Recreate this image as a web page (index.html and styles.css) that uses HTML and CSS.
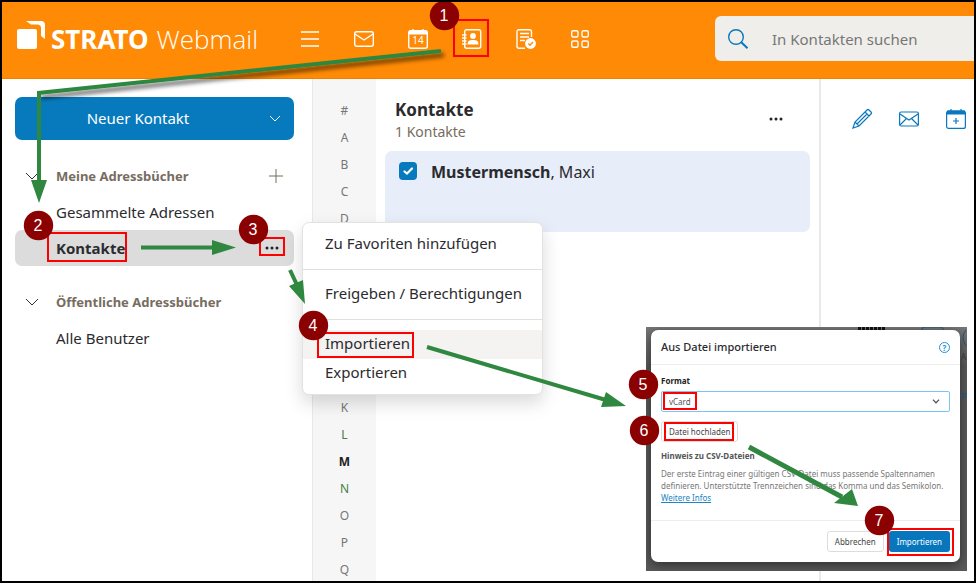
FILE: index.html
```html
<!DOCTYPE html>
<html lang="de">
<head>
<meta charset="utf-8">
<title>STRATO Webmail – Kontakte</title>
<link rel="stylesheet" href="styles.css">
</head>
<body>
<header class="topbar">
  <a class="brand" href="#">
    <svg class="brand-mark" viewBox="0 0 28 28" aria-hidden="true">
      <rect x="0" y="8" width="20" height="20" rx="2"/>
      <path d="M9 0H24Q28 0 28 4V18L24 15V7Q24 3.500 20 3.500H14Z"/>
    </svg>
    <span class="brand-name">STRATO</span>
    <span class="brand-product">Webmail</span>
  </a>
  <nav class="apps" aria-label="Anwendungen">
    <button class="app" aria-label="Menü"><svg viewBox="0 0 20 20"><path d="M1 3H19M1 10H19M1 17H19"/></svg></button>
    <button class="app" aria-label="E-Mail"><svg viewBox="0 0 20 20"><rect x=".7" y="2.700" width="18.600" height="14.600" rx="2"/><path d="M1 5L10 11L19 5"/></svg></button>
    <button class="app" aria-label="Kalender"><svg viewBox="0 0 20 20"><rect x=".7" y="1.700" width="18.600" height="17.600" rx="2"/><path d="M1 3.500H19" stroke-width="4"/><path d="M5 0V2M15 0V2"/><text class="cal-day" x="10" y="15">14</text></svg></button>
    <button class="app" aria-label="Kontakte"><svg viewBox="0 0 20 20"><rect x="2.700" y=".7" width="16" height="18.600" rx="2"/><path d="M0 6H4.500M0 9H4.500M0 12H4.500M0 15H4.500"/><circle class="solid" cx="11" cy="7" r="2.900"/><path class="solid" d="M5.500 15.500C5.500 11.500 8 11 11 11S16.500 11.500 16.500 15.500Z"/></svg></button>
    <button class="app" aria-label="Aufgaben"><svg viewBox="0 0 20 20"><path d="M9 19.300H3Q1 19.300 1 17.300V2.700Q1 .7 3 .7H13.500Q15.500.7 15.500 2.700V8M4 4.500H13M4 8H13M4 11.500H9"/><circle class="solid" cx="14.500" cy="14.500" r="5.400"/><path class="tick" d="M12.300 14.500L14 16.200L17 13"/></svg></button>
    <button class="app" aria-label="Alle Apps"><svg viewBox="0 0 20 20"><rect x="1.700" y="1.700" width="6.300" height="6.300" rx="1.500"/><rect x="12" y="1.700" width="6.300" height="6.300" rx="1.500"/><rect x="1.700" y="12" width="6.300" height="6.300" rx="1.500"/><rect x="12" y="12" width="6.300" height="6.300" rx="1.500"/></svg></button>
  </nav>
  <label class="search">
    <svg viewBox="0 0 20 20" aria-hidden="true"><circle cx="8" cy="8" r="7.300"/><path d="M13 13L19.500 19.300" stroke-width="2"/></svg>
    <input type="search" placeholder="In Kontakten suchen" aria-label="In Kontakten suchen">
  </label>
</header>

<main class="workspace">
  <aside class="sidebar">
    <button class="new-contact"><span>Neuer Kontakt</span><svg class="chevron" viewBox="0 0 12 8"><path d="M1 1L6 6L11 1"/></svg></button>
    <section class="books">
      <h2 class="books-title"><svg class="chevron" viewBox="0 0 12 8"><path d="M0 1L6 7L12 1"/></svg><span>Meine Adressbücher</span>
        <button class="add" aria-label="Adressbuch hinzufügen"><svg viewBox="0 0 14 14"><path d="M7 0V14M0 7H14"/></svg></button></h2>
      <a class="book" href="#">Gesammelte Adressen</a>
      <a class="book book-active" href="#">Kontakte<svg class="dots" viewBox="0 0 14 4"><circle cx="2" cy="2" r="1.500"/><circle cx="7" cy="2" r="1.500"/><circle cx="12" cy="2" r="1.500"/></svg></a>
    </section>
    <section class="books">
      <h2 class="books-title"><svg class="chevron" viewBox="0 0 12 8"><path d="M0 1L6 7L12 1"/></svg><span>Öffentliche Adressbücher</span></h2>
      <a class="book" href="#">Alle Benutzer</a>
    </section>
  </aside>

  <nav class="letters" aria-label="Alphabet">
    <div class="letter-group"><a href="#">#</a><a href="#">A</a><a href="#">B</a><a href="#">C</a><a href="#">D</a></div>
    <div class="letter-group"><a href="#">K</a><a href="#" class="green">L</a><a href="#" class="current">M</a><a href="#" class="green">N</a><a href="#">O</a><a href="#">P</a><a href="#">Q</a></div>
  </nav>

  <section class="contacts">
    <div class="contacts-head">
      <div>
        <h1>Kontakte</h1>
        <p>1 Kontakte</p>
      </div>
      <button class="more" aria-label="Weitere Aktionen"><svg class="dots" viewBox="0 0 14 4"><circle cx="2" cy="2" r="1.500"/><circle cx="7" cy="2" r="1.500"/><circle cx="12" cy="2" r="1.500"/></svg></button>
    </div>
    <label class="contact"><input type="checkbox" checked><span><b>Mustermensch</b>, Maxi</span></label>
  </section>

  <section class="detail">
    <button aria-label="Bearbeiten"><svg viewBox="0 0 20 20"><path d="M1 19L3 13L15 1Q16 0 17 1L19 3Q20 4 19 5L7 17ZM3 13L7 17M13 3L17 7M5 15L15 5"/></svg></button>
    <button aria-label="E-Mail senden"><svg viewBox="0 0 20 20"><rect x=".6" y="3" width="18.800" height="14" rx="1.500"/><path d="M1 5L10 11L19 5M1 16L7.500 9.500M19 16L12.500 9.500"/></svg></button>
    <button aria-label="Termin einladen"><svg viewBox="0 0 20 20"><rect x=".6" y="2" width="18.800" height="17.400" rx="2"/><path d="M1 3.500H19" stroke-width="4"/><path d="M5 0V2M15 0V2M10 9V15M7 12H13"/></svg></button>
  </section>
</main>

<div class="menu" role="menu">
  <button role="menuitem">Zu Favoriten hinzufügen</button>
  <hr>
  <button role="menuitem">Freigeben / Berechtigungen</button>
  <hr>
  <button role="menuitem" class="hover">Importieren</button>
  <button role="menuitem">Exportieren</button>
</div>

<div class="backdrop">
  <svg class="behind" viewBox="0 0 321 244" aria-hidden="true">
    <path class="ink" d="M212 1.500H239" stroke-dasharray="3 1"/>
    <path class="blue" d="M276 5V2Q276 0 279 0H294Q297 0 297 2V5M320 3Q314 10 320 19"/>
  </svg>
  <form class="dialog" role="dialog" aria-labelledby="dialog-title">
    <div class="dialog-head">
      <h2 id="dialog-title">Aus Datei importieren</h2>
      <button type="button" class="help" aria-label="Hilfe">?</button>
    </div>
    <div class="dialog-body">
      <label class="field-label" for="format">Format</label>
      <div class="select-wrap"><select id="format"><option>vCard</option></select><svg class="chevron" viewBox="0 0 12 8"><path d="M1 1L6 6L11 1"/></svg></div>
      <button type="button" class="plain">Datei hochladen</button>
      <h3>Hinweis zu CSV-Dateien</h3>
      <p>Der erste Eintrag einer gültigen CSV-Datei muss passende Spaltennamen definieren. Unterstützte Trennzeichen sind das Komma und das Semikolon. <a href="#">Weitere Infos</a></p>
    </div>
    <div class="dialog-foot">
      <button type="button" class="plain">Abbrechen</button>
      <button type="button" class="primary">Importieren</button>
    </div>
  </form>
  <div class="edge"><span>A</span><span class="edge-link">ot</span></div>
</div>

<svg class="notes" width="976" height="583" viewBox="0 0 976 583">
  <defs><filter id="shade" x="-10%" y="-20%" width="120%" height="150%"><feDropShadow dx="3" dy="4" stdDeviation="2" flood-opacity=".6"/></filter></defs>
  <g class="arrow">
    <path d="M441 51L38 93" filter="url(#shade)"/>
    <path d="M39 91V182M141 247.500H214M290 270L297 285M427 347L606 400"/>
    <path d="M749 447L842 497" stroke-width="5"/>
  </g>
  <g class="head">
    <path d="M31 180H47L39 203ZM212 240V255L236 247.500ZM289 286L303 280L305 304ZM606 392L601 407L626 406ZM852 489L834 503L858 506Z"/>
  </g>
  <g class="frame">
    <rect x="454" y="20" width="34" height="36"/><rect x="48" y="233" width="78" height="28"/><rect x="260" y="238" width="24" height="17"/><rect x="318" y="333" width="95" height="24"/><rect x="664" y="393" width="32" height="16"/><rect x="665" y="423" width="68" height="17"/><rect x="888" y="529" width="65" height="26"/>
  </g>
  <g class="badge">
    <circle cx="444.500" cy="15.500" r="14.700"/><circle cx="38.500" cy="225.500" r="14.700"/><circle cx="253.500" cy="229.500" r="14.700"/><circle cx="313.500" cy="325.500" r="14.700"/><circle cx="643.500" cy="384.500" r="14.700"/><circle cx="644.500" cy="430.500" r="14.700"/><circle cx="879.500" cy="520.500" r="14.700"/>
    <text x="444" y="21">1</text><text x="38" y="231">2</text><text x="253" y="235">3</text><text x="313" y="331">4</text><text x="643" y="390">5</text><text x="644" y="436">6</text><text x="879" y="526">7</text>
  </g>
</svg>
</body>
</html>
```
FILE: styles.css
```css
* { box-sizing: border-box; }

body {
  position: relative;
  display: flex;
  flex-direction: column;
  height: 100vh;
  margin: 0;
  overflow: hidden;
  border: 2px solid #000;
  background: #fff;
  color: #2b2b2f;
  font: 15px/24px "Noto Sans", "Open Sans", sans-serif;
}

h1, h2, h3, p { margin: 0; }
a { color: inherit; text-decoration: none; }
button { padding: 0; border: 0; background: none; color: inherit; font: inherit; }
svg { display: block; fill: none; stroke: currentColor; overflow: visible; }

.topbar {
  display: flex;
  flex: none;
  align-items: center;
  height: 77px;
  padding-bottom: 3px;
  border-bottom: 1px solid #f08000;
  background: #ff8a05;
  color: #fff;
}

.brand { display: flex; align-items: center; width: 298px; padding-left: 15px; font-size: 26px; }
.brand-mark { width: 28px; height: 28px; margin: 0 6px 8px 0; fill: #fff; stroke: none; }
.brand-name { margin-right: 8px; font-weight: 700; }
.brand-product { font-family: "Open Sans", sans-serif; font-weight: 300; }

.apps { display: flex; flex: 1; gap: 34px; }
.app svg { width: 20px; height: 20px; stroke-width: 1.4; }
.app .solid { fill: #fff; stroke: none; }
.app .tick { stroke: #ff8a05; }
.cal-day { fill: #fff; stroke: none; font-size: 10px; text-anchor: middle; }

.search {
  display: flex;
  align-items: center;
  width: 259px;
  height: 45px;
  padding-left: 13px;
  border-radius: 6px 0 0 6px;
  background: #efeeea;
}
.search svg { flex: none; width: 20px; height: 20px; margin-right: 24px; color: #0a78be; stroke-width: 1.4; }
.search input { flex: 1; min-width: 0; padding: 0; border: 0; background: none; font: inherit; }
.search input::placeholder { color: #777; }

.workspace { display: flex; flex: 1; min-height: 0; }

.sidebar { width: 310px; padding: 18px 18px 0 13px; }
.new-contact {
  display: flex;
  align-items: center;
  width: 100%;
  height: 43px;
  padding-right: 13px;
  border-radius: 7px;
  background: #077abe;
  color: #fff;
}
.new-contact span { flex: 1; padding: 0 8px 1px 0; }
.chevron { width: 12px; height: 8px; }
.books { padding-top: 18px; }
.books-title { display: flex; align-items: center; height: 36px; padding: 0 11px; color: #766c60; font-size: 13px; }
.books-title .chevron { margin-right: 18px; color: #333; }
.add { margin-left: auto; }
.add svg { width: 14px; height: 14px; }
.book { display: flex; align-items: center; justify-content: space-between; height: 36px; padding: 0 15px 0 41px; border-radius: 7px; }
.book-active { background: #dcdcdc; font-weight: 700; }
.dots { width: 14px; height: 4px; fill: #222; stroke: none; }

.letters {
  display: flex;
  flex: none;
  flex-direction: column;
  gap: 162px;
  width: 64px;
  padding-top: 18px;
  overflow: hidden;
  border-left: 1px solid #e8e8e8;
  background: #f6f6f6;
  color: #777;
  font-size: 12px;
  line-height: 27px;
  text-align: center;
}
.letter-group { display: flex; flex-direction: column; }
.letters .current { color: #222; font-weight: 700; }
.letters .green { color: #4b7d44; }

.contacts { flex: 1; padding: 19px 9px 0; }
.contacts-head { display: flex; align-items: center; justify-content: space-between; padding: 0 27px 0 10px; }
.contacts-head h1 { font-size: 17px; line-height: 24px; }
.contacts-head p { color: #766c60; font-size: 14px; line-height: 20px; }
.more { padding-bottom: 3px; }
.contact { display: flex; align-items: flex-start; gap: 14px; height: 81px; margin-top: 9px; padding: 9px 14px; border-radius: 7px; background: #e7eef9; font-size: 16px; }
.contact input {
  width: 18px;
  height: 18px;
  margin: 2px 0 0;
  appearance: none;
  border-radius: 4px;
  background: #077abe url("data:image/svg+xml,%3Csvg xmlns='http://www.w3.org/2000/svg' viewBox='0 0 18 18'%3E%3Cpath d='M5.500 9.500L8 11.500L13 6.500' fill='none' stroke='white' stroke-width='2.200' stroke-linecap='round'/%3E%3C/svg%3E");
}

.detail { display: flex; align-items: flex-start; gap: 27px; width: 155px; padding: 30px 0 0 31px; border-left: 2px solid #e9e9e9; color: #0a78be; }
.detail svg { width: 20px; height: 20px; stroke-width: 1.2; }

.menu {
  position: absolute;
  top: 220px;
  left: 300px;
  width: 241px;
  padding: 7px 0 6px;
  border: 1px solid #e2e2e0;
  border-radius: 7px;
  background: #fff;
  box-shadow: 0 8px 18px rgba(0, 0, 0, .15);
}
.menu button { display: block; width: 100%; height: 29px; padding: 0 0 3px 22px; text-align: left; }
.menu hr { margin: 10px 0; border: 0; border-top: 1px solid #e2e0dc; }
.menu .hover { background: #f4f3f2; }

.backdrop {
  position: absolute;
  top: 325px;
  left: 644px;
  width: 321px;
  padding: 3px 7px 9px 5px;
  overflow: hidden;
  background: linear-gradient(#777, #5a5a5a 40px);
}
.behind { position: absolute; top: 0; left: 0; width: 321px; height: 244px; }
.behind .ink { stroke: #111; stroke-width: 3; }
.behind .blue { stroke: #1d5b80; }
.edge { position: absolute; top: 24px; right: 0; display: flex; flex-direction: column; gap: 26px; width: 6px; color: #333; font-size: 8px; line-height: 12px; }
.edge-link { color: #12547c; }
.dialog { position: relative; border-radius: 7px; background: #fff; box-shadow: 0 3px 12px rgba(0, 0, 0, .5); font-size: 8px; line-height: 12px; }
.dialog-head { display: flex; align-items: center; justify-content: space-between; height: 35px; padding: 0 10px; border-bottom: 1px solid #eee; }
.dialog-head h2 { font-size: 11px; font-weight: 500; }
.help { width: 11px; height: 11px; border: 1px solid #2493d5; border-radius: 50%; color: #2493d5; font-size: 8px; font-weight: 700; line-height: 9px; }
.dialog-body { height: 155px; padding: 10px 10px 0; color: #777; }
.dialog-body p { margin-right: -4px; }
.field-label { display: block; color: #222; font-weight: 700; }
.select-wrap { display: flex; align-items: center; margin: 4px 0 9px; padding-right: 9px; border: 1px solid #7cc5f2; border-radius: 2px; color: #555; }
.select-wrap select { flex: 1; height: 19px; padding: 0 7px; border: 0; appearance: none; background: none; color: inherit; font: inherit; }
.select-wrap .chevron { width: 8px; height: 5px; stroke-width: 2; }
.plain { height: 21px; padding: 0 7px; border: 1px solid #ddd; border-radius: 3px; background: #fff; color: #444; }
.dialog h3 { margin: 8px 0 6px; color: #555; font-size: 8px; }
.dialog a { color: #2085c4; text-decoration: underline; }
.dialog-foot { display: flex; justify-content: flex-end; gap: 5px; padding: 10px 10px; border-top: 1px solid #eee; }
.primary { height: 21px; padding: 0 8px; border-radius: 3px; background: #0776bd; color: #fff; }

.notes { position: absolute; top: -2px; left: -2px; pointer-events: none; }
.arrow { stroke: #2f8740; stroke-width: 4; }
.head { fill: #2f8740; stroke: none; }
.frame { stroke: #f00; stroke-width: 2; }
.badge { fill: #8b0000; stroke: none; }
.badge text { fill: #fff; font: 16px "Liberation Sans", sans-serif; text-anchor: middle; }
```
